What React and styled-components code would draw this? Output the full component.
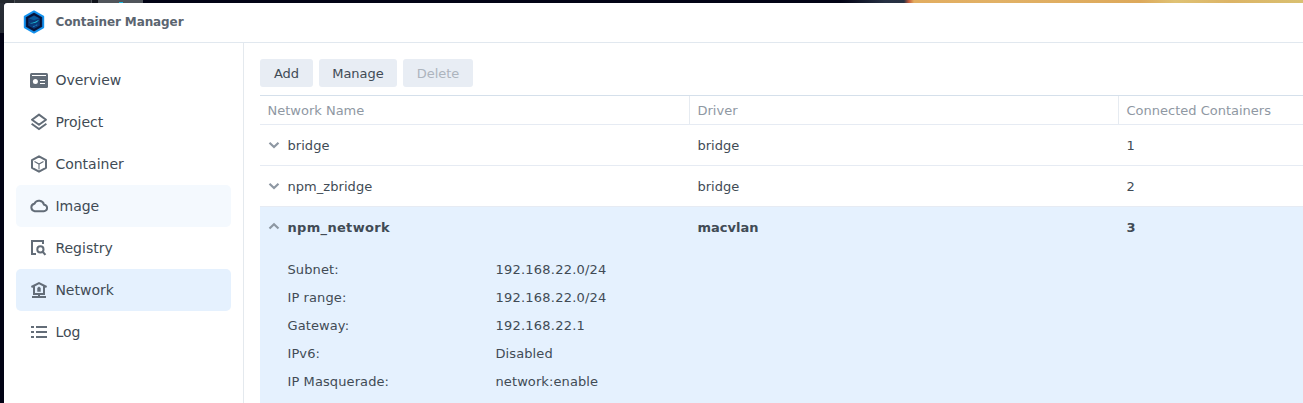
import React from "react";
import styled, { createGlobalStyle } from "styled-components";

const GlobalStyle = createGlobalStyle`
  * { box-sizing: border-box; }
  body {
    margin: 0;
    font-family: Verdana, "DejaVu Sans", sans-serif;
    font-size: 13px;
    color: #414b55;
    overflow: hidden;
  }
`;

const Desktop = styled.div`
  height: 403px;
  padding: 3px 0 0 4px;
  background:
    linear-gradient(#17b9e0, #17b9e0) 119px 2px / 4px 1px no-repeat,
    linear-gradient(#50555b, #50555b) 98px 0 / 45px 3px no-repeat,
    linear-gradient(#10131b, #10131b) 92px 0 / 6px 3px no-repeat,
    linear-gradient(90deg, #23282e 14px, #4a5056 14px, #4a5056 15px, #2b3036 15px, #292d34 91px, #50555b 91px) 0 0 / 92px 3px no-repeat,
    linear-gradient(90deg, transparent 840px, #263043 885px, #273142 904px, #c65b3a 909px, #e2ad60 914px, #e1b166 1000px, #dda95b 1140px, #dfc274 1175px, #dcb466 1230px, #d9c071 1303px) 0 0 / 100% 3px no-repeat,
    linear-gradient(#292e36, #242932) 0 0 / 4px 33px no-repeat,
    #020315;
`;

const Window = styled.div`
  height: 400px;
  display: flex;
  flex-direction: column;
  background: #fff;
  border-top-left-radius: 3px;
  overflow: hidden;
`;

const TitleBar = styled.header`
  height: 40px;
  flex: none;
  display: flex;
  align-items: center;
  gap: 10.5px;
  padding: 0 0 1px 19px;
  border-bottom: 1px solid #e1e8ef;
`;

const Title = styled.h1`
  margin: 0;
  padding-bottom: 1px;
  font-size: 12px;
  line-height: 16px;
  letter-spacing: -0.1px;
  font-weight: bold;
  color: #5b6570;
`;

const Body = styled.div`
  flex: 1;
  display: flex;
  min-height: 0;
`;

const Sidebar = styled.nav`
  width: 240px;
  flex: none;
  padding: 16px 12px;
  border-right: 1px solid #e4e9ee;
`;

const NavItem = styled.a`
  height: 42px;
  display: flex;
  align-items: center;
  gap: 7.4px;
  padding-left: 14px;
  border-radius: 5px;
  font-size: 14px;
  line-height: 20px;
  background: ${(p) => (p.$state === "active" ? "#e5f1fe" : p.$state === "hover" ? "#f4f9fe" : "transparent")};
`;

const Icon = styled.svg`
  width: 18px;
  height: 18px;
  flex: none;
  fill: none;
  stroke: #636d78;
  stroke-width: 2;
`;

const Main = styled.main`
  flex: 1;
  min-width: 0;
  padding: 16px 0 0 16px;
`;

const Toolbar = styled.div`
  display: flex;
  gap: 6px;
  margin-bottom: 8px;
`;

const Button = styled.button`
  width: ${(p) => p.$width}px;
  height: 28px;
  padding: 0;
  border: 0;
  border-radius: 3px;
  background: #e8edf4;
  font: inherit;
  color: #414b55;
  &:disabled { color: #adb4bd; }
`;

const Table = styled.div`
  border-top: 1px solid #d5e0eb;
`;

const Row = styled.div`
  display: grid;
  grid-template-columns: 429px 429px 1fr;
  height: 41px;
  border-bottom: 1px solid ${(p) => (p.$open ? "transparent" : "#e6ebf3")};
  font-weight: ${(p) => (p.$open ? "bold" : "normal")};
`;

const HeadRow = styled(Row)`
  height: 29px;
  color: #8f98a3;
`;

const Cell = styled.div`
  display: flex;
  align-items: center;
  padding: 2px 0 0 8.5px;
  line-height: 16px;
`;

const HeadCell = styled(Cell)`
  padding-left: 7.5px;
  border-left: ${(p) => (p.$first ? "0" : "1px solid #e6ebf1")};
`;

const Chevron = styled.svg`
  width: 12px;
  height: 10px;
  margin: 0 7.5px 2px -0.5px;
  fill: none;
  stroke: #8d97a2;
  stroke-width: 2.2;
`;

const Name = styled.span`
  letter-spacing: ${(p) => (p.$open ? 0.32 : 0.05)}px;
`;

const Expanded = styled.section`
  height: 200px;
  background: #e5f1fe;
`;

const Details = styled.dl`
  display: grid;
  grid-template-columns: 208px 1fr;
  grid-auto-rows: 28px;
  align-items: center;
  margin: 8px 0 0;
  padding-left: 27.5px;
`;

const Detail = styled.dd`
  margin: 0;
  line-height: 16px;
  letter-spacing: ${(p) => (p.$numeric ? 0.22 : 0.1)}px;
`;

function Logo() {
  return (
    <svg width="22" height="24" viewBox="0 0 22 24">
      <path d="M11 1.4 20.2 6.7V17.3L11 22.6 1.8 17.3V6.7Z" fill="#0b1d49" stroke="#1492ee" strokeWidth="2" strokeLinejoin="round" />
      <path d="M11 4.4 17.5 8V16L11 19.6 4.5 16V8Z" fill="#0a3978" stroke="#071337" strokeWidth="1.4" />
      <path d="M6 8.5 11 5.7 16 8.3 11 10.3Z" fill="#0a5c9c" />
      <path d="M6 12.8C9 13.3 13 12 15.8 9.8 14.9 12.8 9 14.4 6 12.8Z" fill="#20c5dc" />
      <path d="M10 16.8 15 14.5" stroke="#1979b9" strokeWidth="1.1" strokeDasharray="2 .7" />
    </svg>
  );
}

const icons = {
  Overview: (
    <>
      <path d="M1.5 2H16.5Q18 2 18 3.5V15.5Q18 17 16.5 17H1.5Q0 17 0 15.5V3.5Q0 2 1.5 2Z" fill="#636d78" stroke="none" />
      <path d="M2 4.5H16M10 9.5H15M10 12.5H15" stroke="#fff" strokeWidth="1.1" />
      <circle cx="5.4" cy="10.6" r="2.5" fill="#fff" stroke="none" />
    </>
  ),
  Project: (
    <>
      <path d="M9 1.6 16 6.7 9 11.8 2 6.7Z" strokeLinejoin="round" />
      <path d="M1.6 10.8 9 16 16.4 10.8" />
    </>
  ),
  Container: (
    <>
      <path d="M9 1.3 16 5.2V12.8L9 16.7 2 12.8V5.2Z" strokeLinejoin="round" />
      <path d="M4.5 6.5 9 9 13.5 6.5M9 9V14.5" strokeWidth="1.1" />
    </>
  ),
  Image: <path d="M4.7 14.2H13.8A3.2 3.2 0 0 0 14 7.8 5.1 5.1 0 0 0 4.4 6.7 3.8 3.8 0 0 0 4.7 14.2Z" strokeLinejoin="round" />,
  Registry: (
    <>
      <path d="M13 5V2H2V15H6" />
      <circle cx="10.4" cy="10.4" r="3.1" />
      <path d="M12.6 12.6 15.4 15.9" strokeWidth="2.2" />
    </>
  ),
  Network: (
    <>
      <path d="M1.4 6 9 2.1 16.6 6M4 5V13H14V5" />
      <path d="M9 13V16M2 16H16" />
      <path d="M7.3 10.8V7L9 5.6 10.7 7V10.8Z" fill="#636d78" stroke="none" />
    </>
  ),
  Log: <path d="M1 4H4M6 4H17M1 9H4M6 9H17M1 14H4M6 14H17" />,
};

const navState = { Image: "hover", Network: "active" };

const networkDetails = [
  ["Subnet:", "192.168.22.0/24"],
  ["IP range:", "192.168.22.0/24"],
  ["Gateway:", "192.168.22.1"],
  ["IPv6:", "Disabled"],
  ["IP Masquerade:", "network:enable"],
];

function NetworkRow({ name, driver, count, open }) {
  return (
    <Row $open={open}>
      <Cell>
        <Chevron viewBox="0 0 12 10">
          <path d={open ? "M1.5 6.5 6 2.3 10.5 6.5" : "M1.5 2.8 6 7 10.5 2.8"} />
        </Chevron>
        <Name $open={open}>{name}</Name>
      </Cell>
      <Cell>{driver}</Cell>
      <Cell>{count}</Cell>
    </Row>
  );
}

export default function App() {
  return (
    <Desktop>
      <GlobalStyle />
      <Window>
        <TitleBar>
          <Logo />
          <Title>Container Manager</Title>
        </TitleBar>
        <Body>
          <Sidebar>
            {Object.entries(icons).map(([label, drawing]) => (
              <NavItem key={label} $state={navState[label]}>
                <Icon viewBox="0 0 18 18">{drawing}</Icon>
                {label}
              </NavItem>
            ))}
          </Sidebar>
          <Main>
            <Toolbar>
              <Button $width={53}>Add</Button>
              <Button $width={78}>Manage</Button>
              <Button $width={70} disabled>Delete</Button>
            </Toolbar>
            <Table>
              <HeadRow>
                <HeadCell $first>Network Name</HeadCell>
                <HeadCell>Driver</HeadCell>
                <HeadCell>Connected Containers</HeadCell>
              </HeadRow>
              <NetworkRow name="bridge" driver="bridge" count="1" />
              <NetworkRow name="npm_zbridge" driver="bridge" count="2" />
              <Expanded>
                <NetworkRow name="npm_network" driver="macvlan" count="3" open />
                <Details>
                  {networkDetails.map(([label, value]) => (
                    <React.Fragment key={label}>
                      <Detail as="dt">{label}</Detail>
                      <Detail $numeric={/^\d/.test(value)}>{value}</Detail>
                    </React.Fragment>
                  ))}
                </Details>
              </Expanded>
            </Table>
          </Main>
        </Body>
      </Window>
    </Desktop>
  );
}
